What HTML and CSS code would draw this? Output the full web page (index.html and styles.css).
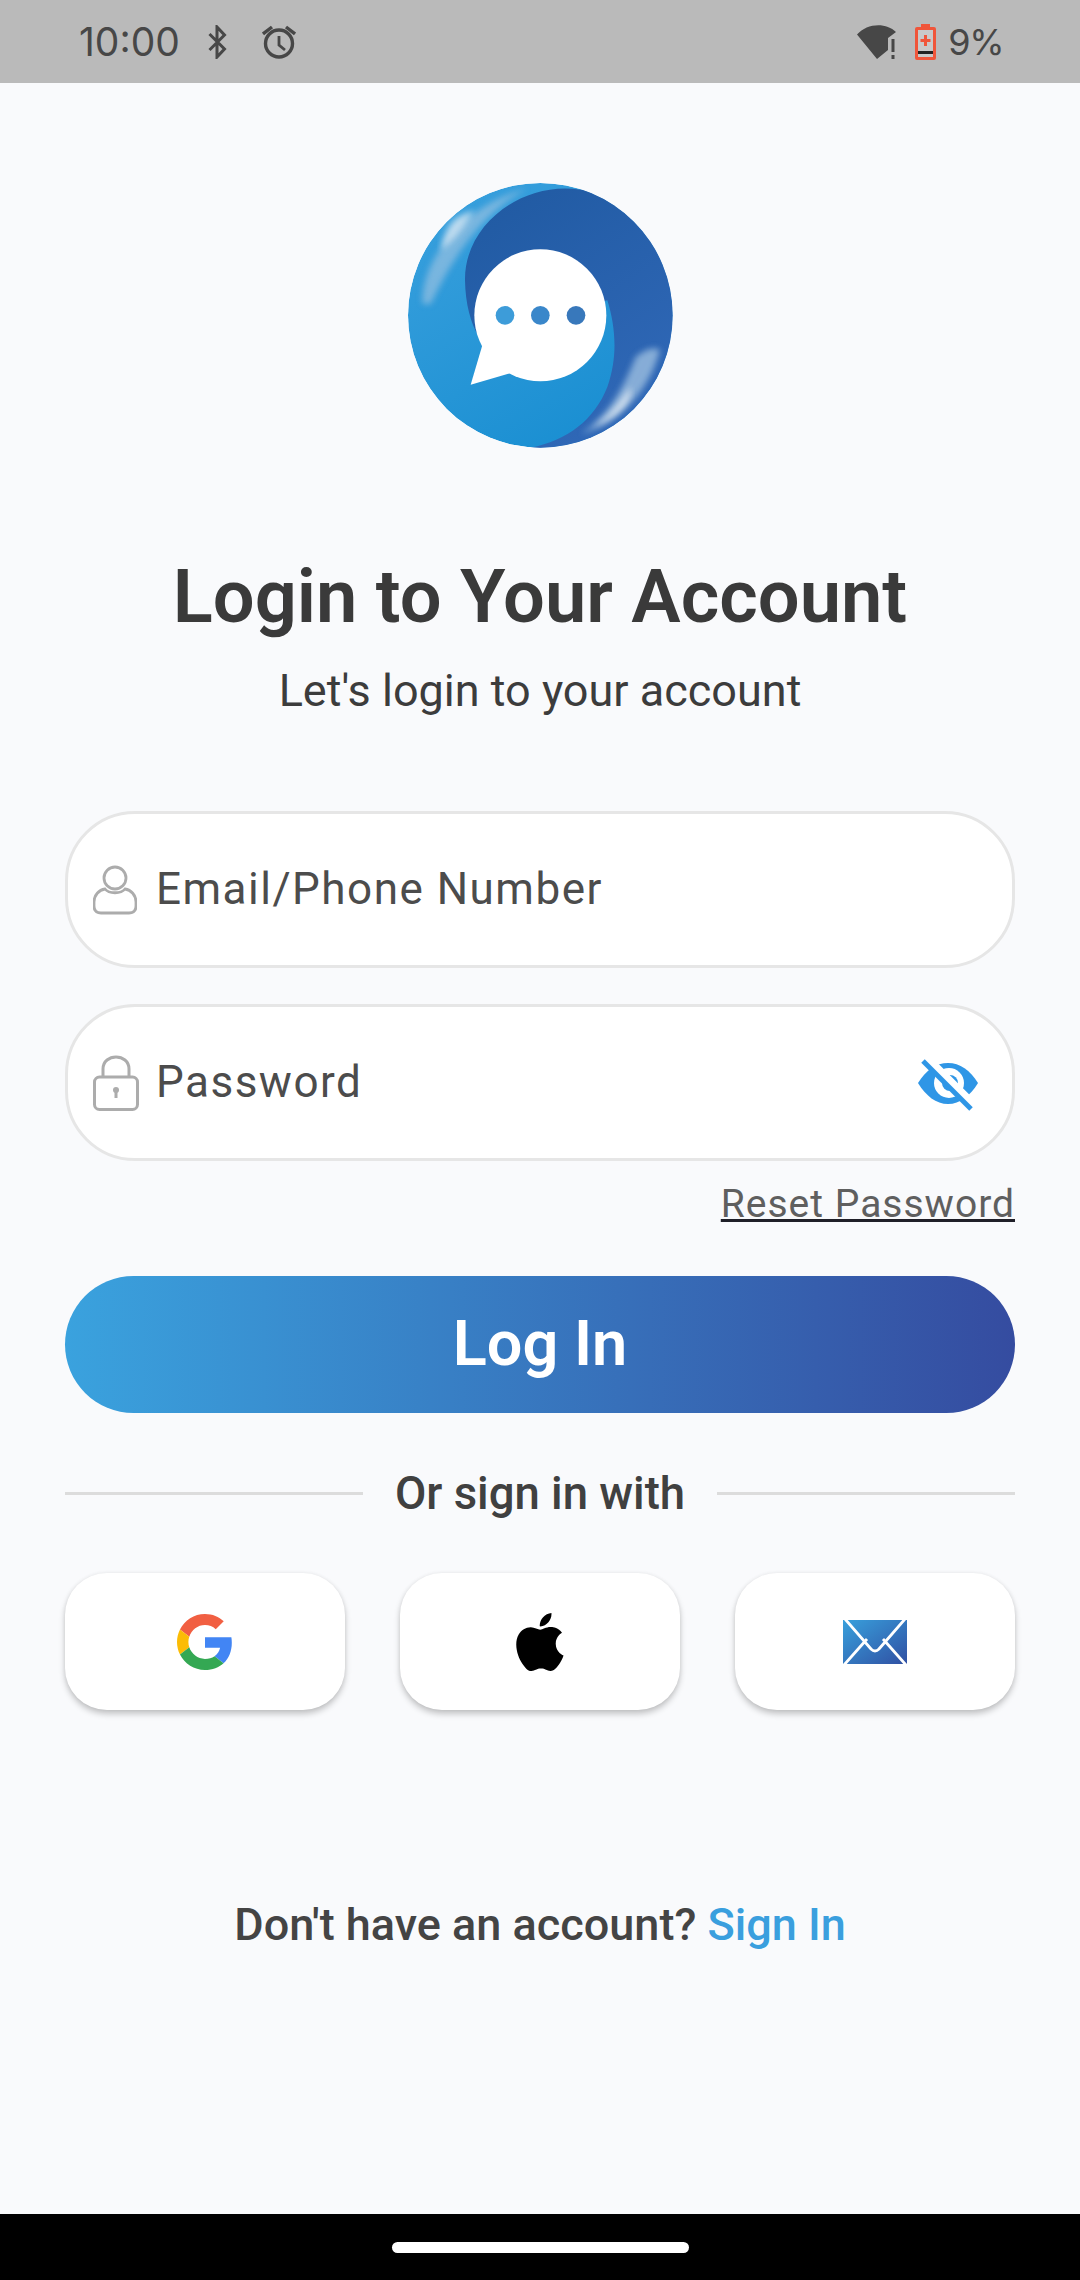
FILE: index.html
```html
<!DOCTYPE html>
<html>
<head>
  <title>Login</title>
  <link rel="stylesheet" href="styles.css">
</head>
<body>
  <div class="status-bar">
    <div class="status-left">
      <span class="clock">10:00</span>
      <svg class="ic-bt" viewBox="0 0 19 34"><path d="M1.500 9 L16.500 24 L9 32 V2 L16.500 10 L1.500 25" fill="none" stroke="#474747" stroke-width="3"/></svg>
      <svg class="ic-alarm" viewBox="0 0 34 34"><circle cx="17" cy="18.500" r="13.500" fill="none" stroke="#474747" stroke-width="3.400"/><path d="M17 11 V20 L23 25" fill="none" stroke="#474747" stroke-width="2.800"/><path d="M1 9 L10 2 M33 9 L24 2" stroke="#474747" stroke-width="3.400"/></svg>
    </div>
    <div class="status-right">
      <svg class="ic-wifi" viewBox="0 0 42 34"><path d="M0 9.500 C10 -2 29 -3 39 7 L31 13 V25 L20 34 Z" fill="#474747"/><path d="M36 14 V27 M36 30 V34" stroke="#474747" stroke-width="3"/></svg>
      <svg class="ic-battery" viewBox="0 0 21 36"><path d="M6 0 H15 V3 H19 Q21 3 21 5 V34 Q21 36 19 36 H2 Q0 36 0 34 V5 Q0 3 2 3 H6 Z" fill="#f0553a"/><rect x="3" y="6" width="15" height="27" fill="#c9c9c9"/><rect x="3" y="27" width="15" height="3" fill="#222"/><path d="M10.500 11 V22 M5.500 16.500 H15.500" stroke="#f0553a" stroke-width="3"/></svg>
      <span class="battery-pct">9%</span>
    </div>
  </div>

  <div class="page">
    <svg class="logo" viewBox="82 68 795 795">
      <defs>
        <linearGradient id="logoLight" x1="0" y1="0" x2="0.6" y2="1">
          <stop offset="0" stop-color="#3ba1de"/>
          <stop offset="1" stop-color="#1a8fd2"/>
        </linearGradient>
        <linearGradient id="logoDark" x1="0.2" y1="0" x2="0.7" y2="1">
          <stop offset="0" stop-color="#205aa2"/>
          <stop offset="1" stop-color="#3169b9"/>
        </linearGradient>
        <filter id="soft"><feGaussianBlur stdDeviation="9"/></filter>
        <clipPath id="logoClip"><circle cx="479" cy="465" r="397"/></clipPath>
      </defs>
      <g clip-path="url(#logoClip)">
        <circle cx="479" cy="465" r="397" fill="url(#logoLight)"/>
        <path d="M125 430 C120 300 250 130 440 85 C350 130 270 220 215 310 C190 350 160 410 150 432 Z" fill="#a9c7e2" opacity=".6" filter="url(#soft)"/>
        <path d="M210 190 C230 165 255 160 280 150 C255 195 225 235 180 270 C185 240 195 210 210 190 Z" fill="#e6eef5" opacity=".75" filter="url(#soft)"/>
        <path d="M600 88 C430 60 250 190 253 360 C254 430 270 490 295 530 L680 420 C705 500 712 590 680 680 C640 780 560 840 450 862 L500 900 L900 900 L900 40 Z" fill="url(#logoDark)"/>
        <path d="M600 822 C680 770 725 690 765 590 C795 565 820 560 838 568 C810 680 730 780 600 822 Z" fill="#9dbfe0" opacity=".8" filter="url(#soft)"/>
        <path d="M640 800 C690 765 720 725 750 680 C755 725 705 775 640 800 Z" fill="#eef3f7" opacity=".85" filter="url(#soft)"/>
      </g>
      <circle cx="479" cy="465" r="198" fill="#fff"/>
      <path d="M305 555 L270 673 L390 638 Z" fill="#fff"/>
      <circle cx="373" cy="465" r="28" fill="#3d9cd9"/>
      <circle cx="479" cy="465" r="28" fill="#3a87ca"/>
      <circle cx="586" cy="465" r="28" fill="#3878bb"/>
    </svg>

    <h1 class="title">Login to Your Account</h1>
    <p class="subtitle">Let's login to your account</p>

    <div class="field field-email">
      <svg class="field-icon" viewBox="0 0 44 50"><circle cx="22" cy="13" r="11" fill="none" stroke="#acacac" stroke-width="2.800"/><path d="M12 24 C16 29 28 29 32 24 C38 25 43 30 43 37 V41 Q43 48 36 48 H8 Q1 48 1 41 V37 C1 30 6 25 12 24 Z" fill="none" stroke="#acacac" stroke-width="2.800"/></svg>
      <span class="field-label">Email/Phone Number</span>
    </div>

    <div class="field field-password">
      <svg class="field-icon" viewBox="0 0 46 56"><path d="M10 23 V14 C10 -2 36 -2 36 14 V23" fill="none" stroke="#acacac" stroke-width="3"/><rect x="1.500" y="22" width="43" height="32.500" rx="5" fill="none" stroke="#acacac" stroke-width="3"/><circle cx="23" cy="35" r="3" fill="#acacac"/><rect x="21.500" y="36" width="3" height="7" fill="#acacac"/></svg>
      <span class="field-label">Password</span>
      <svg class="eye" viewBox="0 0 60 52">
        <path d="M0 24 C8 11 18 4 30 4 C42 4 52 11 60 24 C52 37 42 45 30 45 C18 45 8 37 0 24 Z" fill="#2f96e6"/>
        <circle cx="31" cy="24" r="15" fill="#fff"/>
        <circle cx="32" cy="24" r="8" fill="#2f96e6"/>
        <path d="M8 -2 L58 48" stroke="#fff" stroke-width="8"/>
        <path d="M5 2 L53 50" stroke="#2f96e6" stroke-width="5"/>
      </svg>
    </div>

    <div class="reset-row"><a class="reset-link">Reset Password</a></div>

    <button class="login-btn">Log In</button>

    <div class="divider">
      <span class="divider-line"></span>
      <span class="divider-text">Or sign in with</span>
      <span class="divider-line"></span>
    </div>

    <div class="social-row">
      <div class="social-btn">
        <svg class="ic-google" viewBox="0 0 48 48">
          <path fill="#f15f42" d="M24 9.500c3.540 0 6.710 1.220 9.210 3.600l6.850-6.850C35.900 2.380 30.470 0 24 0 14.620 0 6.510 5.380 2.560 13.220l7.980 6.190C12.430 13.720 17.740 9.500 24 9.500z"/>
          <path fill="#4285f4" d="M46.980 24.550c0-1.570-.15-3.090-.38-4.550H24v9.020h12.940c-.58 2.960-2.260 5.480-4.780 7.180l7.730 6c4.510-4.180 7.090-10.360 7.090-17.650z"/>
          <path fill="#fbbc05" d="M10.530 28.590c-.48-1.450-.76-2.990-.76-4.590s.27-3.140.76-4.590l-7.980-6.190C.92 16.460 0 20.120 0 24c0 3.880.92 7.540 2.560 10.780l7.970-6.190z"/>
          <path fill="#34a853" d="M24 48c6.480 0 11.930-2.130 15.890-5.810l-7.730-6c-2.150 1.450-4.920 2.300-8.160 2.300-6.260 0-11.570-4.220-13.470-9.910l-7.980 6.190C6.510 42.620 14.620 48 24 48z"/>
        </svg>
      </div>
      <div class="social-btn">
        <svg class="ic-apple" viewBox="2.200 0 19.700 24"><path fill="#000" d="M12.152 6.896c-.948 0-2.415-1.078-3.960-1.040-2.040.027-3.910 1.183-4.961 3.014-2.117 3.675-.546 9.103 1.519 12.090 1.013 1.454 2.208 3.090 3.792 3.039 1.520-.065 2.090-.987 3.935-.987 1.831 0 2.350.987 3.960.948 1.637-.026 2.676-1.480 3.676-2.948 1.156-1.688 1.636-3.325 1.662-3.415-.039-.013-3.182-1.221-3.220-4.857-.026-3.040 2.480-4.494 2.597-4.559-1.429-2.090-3.623-2.324-4.390-2.376-2-.156-3.675 1.090-4.610 1.090zM15.530 3.830c.843-1.012 1.400-2.427 1.245-3.830-1.207.052-2.662.805-3.532 1.818-.780.896-1.454 2.338-1.273 3.714 1.338.104 2.715-.688 3.559-1.701"/></svg>
      </div>
      <div class="social-btn">
        <svg class="ic-mail" viewBox="0 0 64 44">
          <defs>
            <linearGradient id="mailGrad" x1="0" y1="0" x2="1" y2="1">
              <stop offset="0" stop-color="#38a0dc"/>
              <stop offset="1" stop-color="#3050a3"/>
            </linearGradient>
          </defs>
          <rect width="64" height="44" fill="url(#mailGrad)"/>
          <path d="M2 -1 L28 29 Q32 33 36 29 L62 -1 M1 45 L24 19 M63 45 L40 19" fill="none" stroke="#fff" stroke-width="2.800"/>
        </svg>
      </div>
    </div>

    <p class="signup">Don't have an account? <a class="signup-link">Sign In</a></p>
  </div>

  <div class="nav-bar"><span class="home-pill"></span></div>
</body>
</html>
```

FILE: styles.css
```css
* {
  box-sizing: border-box;
  margin: 0;
  padding: 0;
}

body {
  width: 1080px;
  height: 2280px;
  display: flex;
  flex-direction: column;
  background: #f9fafc;
  font-family: Roboto, "Liberation Sans", sans-serif;
  overflow: hidden;
}

.status-bar {
  height: 83px;
  flex: none;
  background: #bababa;
  display: flex;
  justify-content: space-between;
  align-items: center;
  padding: 0 77px 0 79px;
  color: #474747;
}

.status-left,
.status-right {
  display: flex;
  align-items: center;
}

.clock {
  font-family: Inter, Roboto, sans-serif;
  font-size: 39px;
  width: 100px;
}

.ic-bt {
  width: 19px;
  height: 34px;
  margin-left: 29px;
}

.ic-alarm {
  width: 34px;
  height: 34px;
  margin-left: 35px;
}

.ic-wifi {
  width: 42px;
  height: 34px;
}

.ic-battery {
  width: 21px;
  height: 36px;
  margin-left: 16px;
}

.battery-pct {
  font-family: Inter, Roboto, sans-serif;
  font-size: 36px;
  letter-spacing: -1.500px;
  margin-left: 12px;
}

.page {
  flex: 1;
  display: flex;
  flex-direction: column;
  padding: 100px 65px 0;
}

.logo {
  width: 265px;
  height: 265px;
  align-self: center;
  flex: none;
}

.title {
  margin-top: 106px;
  font-size: 74px;
  line-height: 86px;
  font-weight: 600;
  color: #3a3a3a;
  text-align: center;
}

.subtitle {
  margin-top: 25px;
  font-size: 45px;
  line-height: 52px;
  font-weight: 400;
  color: #3c3c3c;
  text-align: center;
}

.field {
  height: 157px;
  background: #fff;
  border: 3px solid #e6e6e6;
  border-radius: 70px;
  display: flex;
  align-items: center;
  padding: 0 34px 0 25px;
}

.field-email {
  margin-top: 94px;
}

.field-password {
  margin-top: 36px;
}

.field-icon {
  width: 44px;
  height: 50px;
  flex: none;
}

.field-password .field-icon {
  width: 46px;
  height: 56px;
}

.field-label {
  margin-left: 19px;
  margin-top: -2px;
  font-size: 44px;
  letter-spacing: 1.500px;
  color: #4c4c4c;
}

.field-password .field-label {
  margin-left: 17px;
}

.eye {
  width: 60px;
  height: 52px;
  margin-left: auto;
  margin-top: 4px;
}

.reset-row {
  display: flex;
  justify-content: flex-end;
  margin-top: 21px;
}

.reset-link {
  font-size: 39px;
  line-height: 44px;
  letter-spacing: 1px;
  color: #5f5f5f;
  text-decoration: underline;
  text-decoration-color: #1f1f28;
}

.login-btn {
  height: 137px;
  margin-top: 50px;
  border: none;
  border-radius: 69px;
  background: linear-gradient(90deg, #3aa2de 0%, #354ca0 100%);
  color: #fff;
  font-family: Roboto, sans-serif;
  font-size: 63px;
  font-weight: 600;
  padding-bottom: 2px;
}

.divider {
  display: flex;
  align-items: center;
  gap: 32px;
  margin-top: 53px;
}

.divider-line {
  flex: 1;
  height: 3px;
  background: #dcdcdc;
}

.divider-text {
  font-size: 45.500px;
  line-height: 52px;
  font-weight: 500;
  color: #404040;
  padding-top: 2px;
}

.social-row {
  display: grid;
  grid-template-columns: repeat(3, 280px);
  justify-content: space-between;
  margin-top: 53px;
}

.social-btn {
  height: 137px;
  background: #fff;
  border-radius: 42px;
  box-shadow: 0 4px 6px rgba(0, 0, 0, 0.22), 0 0 4px rgba(0, 0, 0, 0.06);
  display: flex;
  align-items: center;
  justify-content: center;
}

.ic-google {
  width: 56px;
  height: 58px;
}

.ic-apple {
  width: 48px;
  height: 58px;
}

.ic-mail {
  width: 64px;
  height: 44px;
}

.signup {
  margin-top: 189px;
  font-size: 45px;
  line-height: 52px;
  font-weight: 500;
  color: #444;
  text-align: center;
}

.signup-link {
  color: #3a9fde;
}

.nav-bar {
  height: 66px;
  flex: none;
  background: #000;
  display: flex;
  align-items: center;
  justify-content: center;
}

.home-pill {
  width: 297px;
  height: 11px;
  border-radius: 6px;
  background: #fff;
}
```
